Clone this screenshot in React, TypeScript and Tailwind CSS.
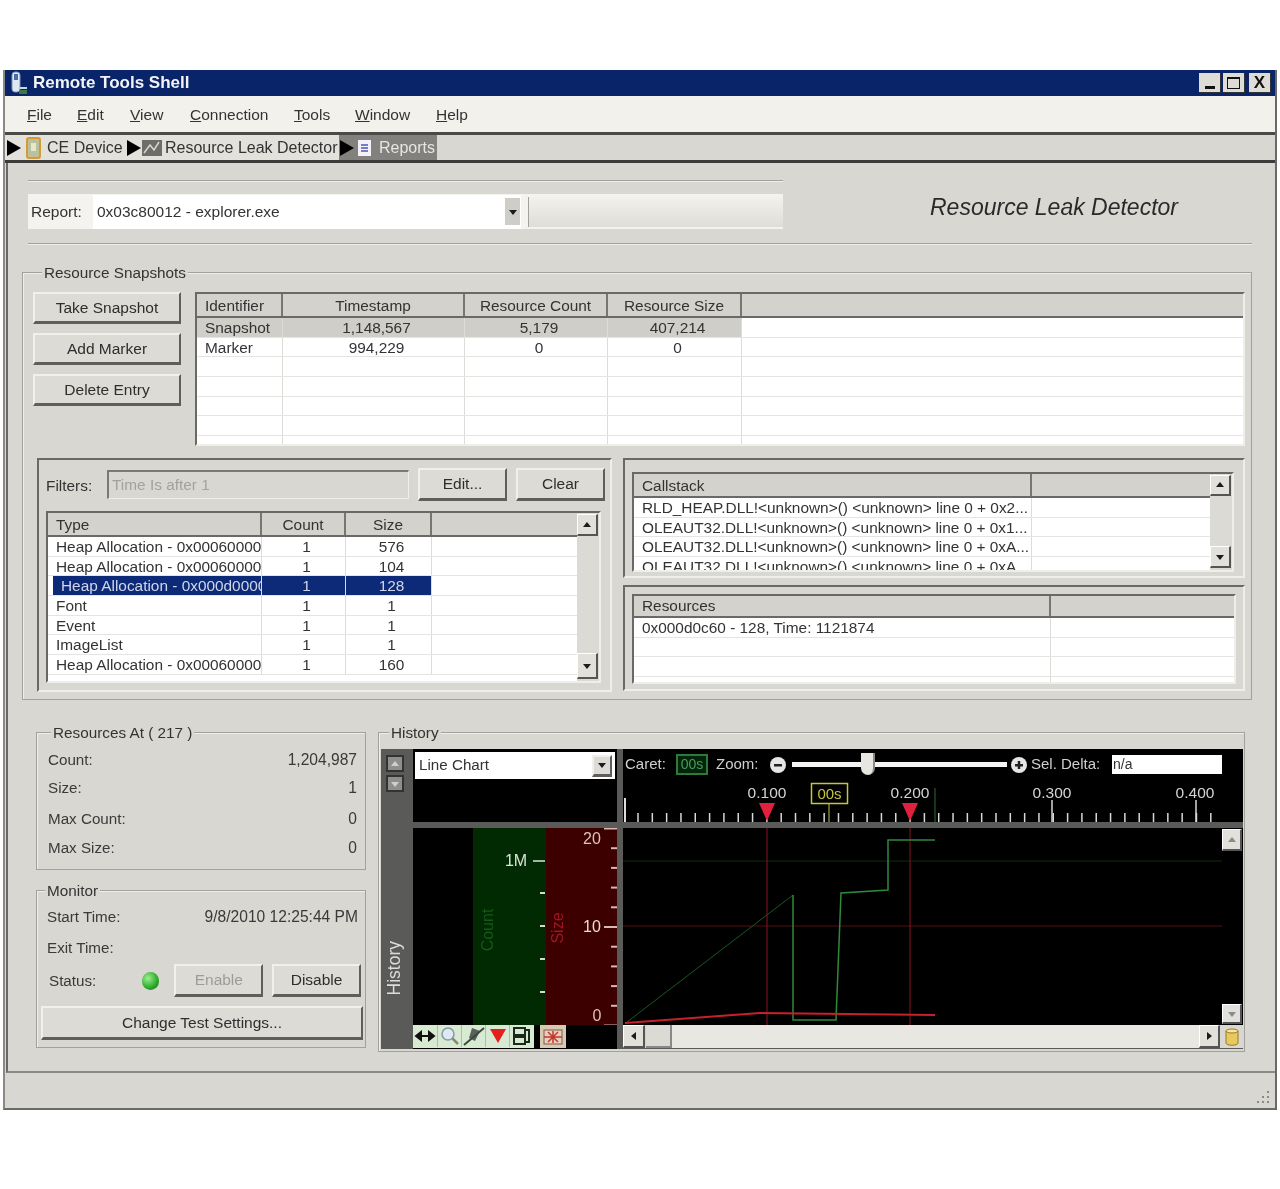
import type { ReactNode } from "react";
import clsx from "clsx";

const raised =
  "border-t-2 border-l-2 border-r-2 border-b-[3px] border-t-[#f1f0ec] border-l-[#f1f0ec] border-r-[#5f5e5b] border-b-[#5f5e5b] bg-[#dddbd5]";
const sunken = "border-t-2 border-l-2 border-r-2 border-b-2 border-t-[#6a6966] border-l-[#6a6966] border-r-[#efeeea] border-b-[#efeeea]";

function Btn({ children, className, disabled }: { children: ReactNode; className: string; disabled?: boolean }) {
  return (
    <button type="button" className={clsx(raised, "flex items-center justify-center text-[15.5px]", disabled ? "text-[#9d9c97]" : "text-[#2e2e2e]", className)}>
      {children}
    </button>
  );
}

function Arrow({ dir, fill = "#1c1c1c" }: { dir: "up" | "down" | "left" | "right"; fill?: string }) {
  const pts = { up: "1,7 5,2 9,7", down: "1,3 9,3 5,8", left: "7,1 7,9 2,5", right: "3,1 3,9 8,5" }[dir];
  return (
    <svg width="10" height="10" viewBox="0 0 10 10">
      <polygon points={pts} fill={fill} />
    </svg>
  );
}

function ScrollBtn({ dir, className, fill }: { dir: "up" | "down" | "left" | "right"; className: string; fill?: string }) {
  return (
    <div className={clsx("flex shrink-0 items-center justify-center border-t border-l border-t-white border-l-white border-r-2 border-b-2 border-r-[#555] border-b-[#555] bg-[#e2e0da]", className)}>
      <Arrow dir={dir} fill={fill} />
    </div>
  );
}

function Group({ title, className, legendClass, children }: { title: string; className: string; legendClass: string; children: ReactNode }) {
  return (
    <div className={clsx("border border-[#a2a19c] shadow-[inset_1px_1px_0_#efeeea]", className)}>
      <div className={clsx("-mt-[10px] h-[20px] w-fit bg-[#d9d7d1] px-[2px] text-[15.3px] leading-[20px] text-[#333]", legendClass)}>{title}</div>
      {children}
    </div>
  );
}

type TableProps = {
  cols: string;
  headers: string[];
  centered?: number[];
  rows: string[][];
  selected?: number;
  tinted?: number;
  headCell?: string;
  rowCount: number;
};

function DataTable({ cols, headers, centered = [], rows, selected, tinted, headCell = "h-[22px] pt-[1px] leading-[22px]", rowCount }: TableProps) {
  const filled = Array.from({ length: rowCount }, (_, i) => rows[i] ?? headers.map(() => ""));
  return (
    <div className="min-w-0 flex-1 overflow-hidden bg-white">
      <div className={clsx("grid border-b-2 border-b-[#6a6966] bg-[#d4d2cc]", cols)}>
        {headers.map((h, i) => (
          <div key={i} className={clsx("truncate border-r-2 border-r-[#77766f] px-[8px] text-[15.4px] text-[#333] last:border-r-0", headCell, centered.includes(i) && "text-center")}>
            {h}
          </div>
        ))}
      </div>
      {filled.map((row, r) => (
        <div key={r} className={clsx("grid h-[19.7px] border-b border-b-[#e4e4e1]", cols)}>
          {row.map((cell, c) => (
            <div
              key={c}
              className={clsx(
                "overflow-hidden whitespace-nowrap border-r border-r-[#dcdcd8] pl-[8px] pr-[2px] text-[15.4px] leading-[19px] last:border-r-0",
                centered.includes(c) && "pl-[2px] text-center",
                c < headers.length - 1 && selected === r && "bg-[#0c2a78] text-[#cfd6ea]",
                c === 0 && selected === r && "ml-[5px] pl-[3px]",
                c < headers.length - 1 && tinted === r && "bg-[#d0cec8] text-[#333]",
                selected !== r && tinted !== r && "text-[#333]",
              )}
            >
              {cell}
            </div>
          ))}
        </div>
      ))}
    </div>
  );
}

function StatRow({ label, value, className }: { label: string; value?: string; className: string }) {
  return (
    <div className={clsx("flex items-center justify-between text-[#3a3a3a]", className)}>
      <span className="text-[15.2px]">{label}</span>
      <span className="text-[15.6px]">{value}</span>
    </div>
  );
}

function Segment({ icon, label, className, arrow = "#000" }: { icon: ReactNode; label: string; className: string; arrow?: string }) {
  return (
    <div className={clsx("flex h-full items-center", className)}>
      <svg width="16" height="18" viewBox="0 0 16 18" className="shrink-0">
        <polygon points="1,1 15,9 1,17" fill={arrow} />
      </svg>
      {icon}
      <span className="whitespace-nowrap">{label}</span>
    </div>
  );
}

const snapshotRows = [
  ["Snapshot", "1,148,567", "5,179", "407,214", ""],
  ["Marker", "994,229", "0", "0", ""],
];

const typeRows = [
  ["Heap Allocation - 0x00060000", "1", "576", ""],
  ["Heap Allocation - 0x00060000", "1", "104", ""],
  ["Heap Allocation - 0x000d0000", "1", "128", ""],
  ["Font", "1", "1", ""],
  ["Event", "1", "1", ""],
  ["ImageList", "1", "1", ""],
  ["Heap Allocation - 0x00060000", "1", "160", ""],
];

const callRows = [
  ["RLD_HEAP.DLL!<unknown>() <unknown> line 0 + 0x2...", ""],
  ["OLEAUT32.DLL!<unknown>() <unknown> line 0 + 0x1...", ""],
  ["OLEAUT32.DLL!<unknown>() <unknown> line 0 + 0xA...", ""],
  ["OLEAUT32.DLL!<unknown>() <unknown> line 0 + 0xA...", ""],
];

const menus = [
  ["F", "ile", "w-[50px]"],
  ["E", "dit", "w-[53px]"],
  ["V", "iew", "w-[60px]"],
  ["C", "onnection", "w-[104px]"],
  ["T", "ools", "w-[61px]"],
  ["W", "indow", "w-[81px]"],
  ["H", "elp", "w-[40px]"],
];

function Ruler() {
  const first = 638;
  const ticks = Array.from({ length: 41 }, (_, i) => first + i * 14.32);
  const labels = [
    ["0.100", 767],
    ["0.200", 910],
    ["0.300", 1052],
    ["0.400", 1195],
  ] as const;
  return (
    <svg viewBox="623 780 620 42" className="block h-[42px] w-[620px]">
      <line x1="625" y1="798" x2="625" y2="822" stroke="#ddd" strokeWidth="2" />
      {ticks.map((x) => (
        <line key={x} x1={x} y1="813" x2={x} y2="822" stroke="#d8d8d8" strokeWidth="1.5" />
      ))}
      <line x1="1052" y1="800" x2="1052" y2="822" stroke="#d8d8d8" strokeWidth="1.5" />
      <line x1="1196" y1="800" x2="1196" y2="822" stroke="#d8d8d8" strokeWidth="1.5" />
      <line x1="935" y1="788" x2="935" y2="822" stroke="#2f6b2f" />
      {labels.map(([t, x]) => (
        <text key={t} x={x} y="798" textAnchor="middle" fontSize="15.5" fill="#d4d4d4">
          {t}
        </text>
      ))}
      <rect x="811.5" y="783.5" width="36" height="20" fill="#000" stroke="#c6c63e" strokeWidth="1.5" />
      <text x="829.5" y="799" textAnchor="middle" fontSize="15" fill="#c6c63e">
        00s
      </text>
      <line x1="829" y1="804" x2="829" y2="822" stroke="#c6c63e" />
      <polygon points="759,803 775,803 767,821" fill="#e0203c" />
      <polygon points="902,803 918,803 910,821" fill="#e0203c" />
    </svg>
  );
}

function Traces() {
  return (
    <svg viewBox="623 828 599 197" className="block h-[197px] w-[599px]">
      <line x1="623" y1="861" x2="1222" y2="861" stroke="#0f2f0f" />
      <line x1="623" y1="926" x2="1222" y2="926" stroke="#5a0c14" />
      <line x1="767" y1="828" x2="767" y2="1025" stroke="#8a1420" />
      <line x1="910" y1="828" x2="910" y2="1025" stroke="#8a1420" />
      <line x1="627" y1="1022" x2="793" y2="895" stroke="#1d5526" />
      <polyline points="793,895 793,1020 836,1020 841,893 888,890 888,840 935,840" fill="none" stroke="#2f8a3a" strokeWidth="1.5" />
      <polyline points="625,1023 760,1013 935,1015" fill="none" stroke="#c8202c" strokeWidth="2" />
    </svg>
  );
}

function AxisPane() {
  const redTicks = Array.from({ length: 11 }, (_, i) => 828 + i * 19.7);
  return (
    <svg viewBox="413 828 204 197" className="block h-[197px] w-[204px]">
      <rect x="413" y="828" width="60" height="197" fill="#000" />
      <rect x="473" y="828" width="73" height="197" fill="#012a03" />
      <rect x="546" y="828" width="71" height="197" fill="#3c0000" />
      {redTicks.map((y, i) => (
        <line key={y} x1={i % 5 === 0 ? 604 : 611} y1={y + 0.5} x2="617" y2={y + 0.5} stroke="#d9b8b4" strokeWidth="2" />
      ))}
      <line x1="533" y1="861" x2="545" y2="861" stroke="#d8e4d8" strokeWidth="1.5" />
      {[893, 926, 959, 992].map((y) => (
        <line key={y} x1="540" y1={y} x2="545" y2={y} stroke="#cfdccf" strokeWidth="2" />
      ))}
      <text x="516" y="866" textAnchor="middle" fontSize="16" fill="#d8e4d8">1M</text>
      <text x="592" y="844" textAnchor="middle" fontSize="16" fill="#e0c0bc">20</text>
      <text x="592" y="932" textAnchor="middle" fontSize="16" fill="#f0d8d4">10</text>
      <text x="597" y="1021" textAnchor="middle" fontSize="16" fill="#e0c0bc">0</text>
      <text transform="translate(493 930) rotate(-90)" textAnchor="middle" fontSize="16" fill="#125c14">Count</text>
      <text transform="translate(563 928) rotate(-90)" textAnchor="middle" fontSize="16" fill="#a01620">Size</text>
    </svg>
  );
}

function ToolIcon({ children, className }: { children: ReactNode; className: string }) {
  return <div className={clsx("flex h-[22px] shrink-0 items-center justify-center border-r border-r-[#aebfa8]", className)}>{children}</div>;
}

function HistoryToolbar() {
  return (
    <div className="flex h-full bg-black">
      <div className="flex h-[23px] bg-[#d8ebd2]">
        <ToolIcon className="w-[25px]">
          <svg width="22" height="14" viewBox="0 0 22 14">
            <path d="M4 7h14M7 3L2 7l5 4zM15 3l5 4-5 4z" fill="#111" stroke="#111" strokeWidth="2" />
          </svg>
        </ToolIcon>
        <ToolIcon className="w-[24px]">
          <svg width="20" height="20" viewBox="0 0 20 20">
            <circle cx="8" cy="8" r="6" fill="#dfe9f2" stroke="#7f9aa8" strokeWidth="1.5" />
            <path d="M12.5 12.5L18 18" stroke="#8a8a70" strokeWidth="2.5" />
          </svg>
        </ToolIcon>
        <ToolIcon className="w-[24px]">
          <svg width="22" height="20" viewBox="0 0 22 20">
            <path d="M9 2l8 3-5 10-6-3z" fill="#5b5f60" />
            <path d="M1 19L21 2" stroke="#3a4a3a" strokeWidth="2" />
          </svg>
        </ToolIcon>
        <ToolIcon className="w-[24px]">
          <svg width="18" height="16" viewBox="0 0 18 16">
            <polygon points="1,1 17,1 9,15" fill="#e4201c" />
          </svg>
        </ToolIcon>
        <ToolIcon className="w-[24px] border-r-0">
          <svg width="22" height="20" viewBox="0 0 22 20">
            <path d="M3 2h11v7H3zM3 11h11v7H3zM14 4h4v12h-4" fill="none" stroke="#1a2a1a" strokeWidth="2" />
          </svg>
        </ToolIcon>
      </div>
      <div className="ml-[6px] flex h-[23px] w-[26px] items-center justify-center bg-[#d9c9b0]">
        <svg width="20" height="16" viewBox="0 0 20 16">
          <rect x="1" y="1" width="18" height="14" fill="#e6cfc0" stroke="#7c5a4a" />
          <path d="M1 8h18M5 3l10 10M15 3L5 13M10 2v12" stroke="#c23a2a" strokeWidth="1.5" />
        </svg>
      </div>
    </div>
  );
}

function ControlBar() {
  return (
    <div className="flex h-[31px] items-center pl-[2px] text-[15px] text-[#cfcfcf]">
      <span className="w-[51px]">Caret:</span>
      <span className="flex h-[21px] w-[32px] items-center justify-center border-2 border-[#2f7a3a] bg-[#02240a] text-[14px] text-[#4f9a5a]">00s</span>
      <span className="ml-[8px] w-[53px]">Zoom:</span>
      <svg width="18" height="18" viewBox="0 0 18 18" className="shrink-0">
        <circle cx="9" cy="9" r="8" fill="#e6e6e6" />
        <rect x="5" y="8" width="8" height="2.5" fill="#222" />
      </svg>
      <div className="relative ml-[5px] h-[5px] w-[215px] bg-[#f4f4f4]">
        <div className="absolute -top-[9px] left-[69px] h-[22px] w-[14px] rounded-b-[7px] border-r-2 border-r-[#8a8a86] bg-[#e8e6e0]" />
      </div>
      <svg width="18" height="18" viewBox="0 0 18 18" className="ml-[3px] shrink-0">
        <circle cx="9" cy="9" r="8" fill="#e6e6e6" />
        <path d="M5 9.2h8M9 5v8" stroke="#222" strokeWidth="2.5" />
      </svg>
      <span className="ml-[3px] w-[81px] whitespace-nowrap">Sel. Delta:</span>
      <span className="flex h-[19px] w-[110px] items-center bg-white pl-[1px] text-[14px] text-[#333]">n/a</span>
    </div>
  );
}

function HistoryPanel() {
  return (
    <div className="ml-[2px] mt-[6px] grid h-[300px] w-[862px] grid-cols-[32px_204px_6px_620px] grid-rows-[73px_6px_197px_24px] bg-[#5a5a59]">
      <div className="col-start-1 row-span-4 row-start-1 flex flex-col items-center pr-[4px] pt-[6px]">
        <div className="flex h-[17px] w-[18px] items-center justify-center border-2 border-[#333] bg-[#8e8e8a]"><Arrow dir="up" fill="#cfcfcb" /></div>
        <div className="mt-[3px] flex h-[17px] w-[18px] items-center justify-center border-2 border-[#333] bg-[#8e8e8a]"><Arrow dir="down" fill="#cfcfcb" /></div>
        <div className="mt-[149px] rotate-180 text-[17.5px] leading-none text-[#dcdcdc] [writing-mode:vertical-rl]">History</div>
      </div>
      <div className="col-start-2 row-start-1 bg-black pt-[3px]">
        <div className="mx-[2px] flex h-[27px] items-center justify-between bg-white pl-[4px] pr-[3px] text-[15.2px] text-[#333]">
          Line Chart
          <div className={clsx(raised, "flex h-[22px] w-[20px] items-center justify-center")}><Arrow dir="down" /></div>
        </div>
      </div>
      <div className="col-start-4 row-start-1 bg-black">
        <ControlBar />
        <Ruler />
      </div>
      <div className="col-start-2 row-start-3"><AxisPane /></div>
      <div className="col-start-4 row-start-3 flex bg-black">
        <Traces />
        <div className="flex w-[21px] flex-col justify-between py-[1px]">
          <ScrollBtn dir="up" fill="#8a8a86" className="h-[22px] w-[20px]" />
          <ScrollBtn dir="down" fill="#8a8a86" className="h-[20px] w-[20px]" />
        </div>
      </div>
      <div className="col-start-2 row-start-4"><HistoryToolbar /></div>
      <div className="col-start-4 row-start-4 flex h-[23px] bg-[#d4d2cc]">
        <ScrollBtn dir="left" className="h-[23px] w-[22px]" />
        <div className="ml-[1px] h-[23px] w-[26px] border-r-2 border-b-2 border-r-[#888] border-b-[#888] bg-[#dcdad4]" />
        <div className="flex-1 bg-[#e9e7e1]" />
        <ScrollBtn dir="right" className="h-[23px] w-[21px]" />
        <div className="flex w-[23px] items-center justify-center bg-[#d9d7d1]">
          <svg width="14" height="18" viewBox="0 0 14 18">
            <path d="M1 3v12c0 3 12 3 12 0V3z" fill="#e8c860" stroke="#9a7a20" />
            <ellipse cx="7" cy="3" rx="6" ry="2" fill="#f6e6a0" stroke="#9a7a20" />
          </svg>
        </div>
      </div>
    </div>
  );
}

export default function App() {
  return (
    <div className="h-[1189px] w-[1280px] overflow-hidden bg-white pt-[70px] font-['Liberation_Sans',sans-serif] blur-[0.5px]">
      <div className="mx-[3px] flex h-[1040px] flex-col border-r-2 border-b-2 border-l-2 border-r-[#6a6966] border-b-[#6a6966] border-l-[#8a8985] bg-[#d9d7d1]">
        {/* title bar */}
        <div className="flex h-[26px] shrink-0 items-center justify-between bg-[#0a2469] pl-[5px] pr-[4px]">
          <div className="flex items-center">
            <svg width="20" height="24" viewBox="0 0 20 24">
              <rect x="2" y="1" width="8" height="20" rx="3" fill="#dfe8f2" stroke="#7a93b8" />
              <rect x="4" y="3" width="4" height="6" fill="#4a6ea8" />
              <path d="M10 17h7" stroke="#c8d8e8" strokeWidth="2" />
              <rect x="9" y="19" width="8" height="4" fill="#3a7a4a" />
            </svg>
            <span className="ml-[3px] text-[17px] font-bold text-[#f2f4f8]">Remote Tools Shell</span>
          </div>
          <div className="flex items-center gap-[2px]">
            <div className="flex h-[20px] w-[22px] items-end justify-center border-r border-b border-r-[#333] border-b-[#333] bg-[#dedcd6] pb-[3px]"><div className="h-[3px] w-[10px] bg-[#111]" /></div>
            <div className="flex h-[20px] w-[22px] items-center justify-center border-r border-b border-r-[#333] border-b-[#333] bg-[#dedcd6]"><div className="h-[12px] w-[13px] border border-t-2 border-[#111]" /></div>
            <div className="ml-[2px] flex h-[20px] w-[22px] items-center justify-center border-r border-b border-r-[#333] border-b-[#333] bg-[#dedcd6] text-[17px] font-bold leading-none text-[#111]">X</div>
          </div>
        </div>
        {/* menu */}
        <div className="flex h-[36px] shrink-0 items-center bg-[#f3f1ec] pl-[22px] pt-[2px] text-[15.5px] text-[#333]">
          {menus.map(([first, rest, w]) => (
            <span key={first} className={w}>
              <u>{first}</u>
              {rest}
            </span>
          ))}
        </div>
        {/* breadcrumb */}
        <div className="flex h-[31px] shrink-0 items-center border-t-[3px] border-b-[3px] border-t-[#4a4a48] border-b-[#3c3c3a] bg-[#d9d7d1] text-[16px] text-[#333]">
          <Segment
            className="w-[120px] bg-[#e3e1db] pl-[1px]"
            label="CE Device"
            icon={
              <svg width="16" height="22" viewBox="0 0 16 22" className="ml-[4px] mr-[5px] shrink-0">
                <rect x="1" y="1" width="13" height="20" rx="2" fill="#b8c2a0" stroke="#d89a30" strokeWidth="2" />
                <rect x="5" y="6" width="5" height="8" fill="#e8e8c8" />
              </svg>
            }
          />
          <Segment
            className="w-[214px] bg-[#e3e1db] pl-[1px]"
            label="Resource Leak Detector"
            icon={
              <svg width="20" height="18" viewBox="0 0 20 18" className="mr-[3px] shrink-0">
                <rect x="0" y="1" width="20" height="16" fill="#6e6e68" />
                <path d="M2 14L8 6l4 5 5-8" stroke="#d8d8d0" strokeWidth="1.5" fill="none" />
              </svg>
            }
          />
          <Segment
            className="w-[98px] bg-[#82817d] text-[#e6e6e2]"
            label="Reports"
            icon={
              <svg width="13" height="18" viewBox="0 0 13 18" className="ml-[3px] mr-[8px] shrink-0">
                <rect x="0" y="1" width="13" height="16" fill="#f2f2f8" />
                <path d="M3 6h7M3 9h7M3 12h7" stroke="#4a5ab8" strokeWidth="1.5" />
              </svg>
            }
          />
        </div>
        {/* main */}
        <div className="ml-[1px] flex-1 border-b-2 border-l-2 border-b-[#8a8985] border-l-[#6a6966] pl-[14px] pt-[17px]">
          <div className="ml-[6px] h-[2px] w-[755px] border-t border-t-[#a2a19c] bg-[#efeeea]" />
          <div className="flex h-[61px] items-start justify-between">
            <div className="ml-[6px] mt-[12px] flex h-[35px] w-[755px] items-center bg-[#f4f3ef] text-[15.5px] text-[#333]">
              <span className="ml-[3px] w-[62px]">Report:</span>
              <div className="flex h-[34px] w-[428px] items-center justify-between bg-white pl-[4px] pr-[1px]">
                0x03c80012 - explorer.exe
                <div className="flex h-[27px] w-[15px] items-center justify-center bg-[#cfcdc7]"><Arrow dir="down" /></div>
              </div>
              <div className="ml-[7px] h-[30px] w-[255px] border-l border-l-[#a2a19c] bg-gradient-to-b from-[#f2f1ed] to-[#dfddd7]" />
            </div>
            <div className="mr-[97px] mt-[8px] text-[23px] italic text-[#2a2a2a]">Resource Leak Detector</div>
          </div>
          <div className="ml-[6px] h-[2px] w-[1224px] border-t border-t-[#a2a19c] bg-[#efeeea]" />

          {/* snapshots */}
          <Group title="Resource Snapshots" className="mt-[27px] h-[428px] w-[1230px]" legendClass="ml-[19px]">
            <div className="mt-[9px] flex pl-[10px]">
              <div className="flex w-[148px] flex-col gap-[9px]">
                <Btn className="h-[32px]">Take Snapshot</Btn>
                <Btn className="h-[32px]">Add Marker</Btn>
                <Btn className="h-[32px]">Delete Entry</Btn>
              </div>
              <div className={clsx(sunken, "ml-[14px] flex h-[154px] w-[1050px]")}>
                <DataTable
                  cols="grid-cols-[86px_182px_143px_134px_1fr]"
                  headers={["Identifier", "Timestamp", "Resource Count", "Resource Size", ""]}
                  centered={[1, 2, 3]}
                  rows={snapshotRows}
                  tinted={0}
                  rowCount={7}
                />
              </div>
            </div>
            <div className="mt-[12px] flex pl-[14px]">
              {/* filters + types */}
              <div className={clsx(sunken, "h-[234px] w-[575px] pl-[7px] pt-[7px]")}>
                <div className="flex h-[34px] items-center text-[15.4px] text-[#333]">
                  <span className="w-[61px] pt-[3px]">Filters:</span>
                  <div className="flex h-[29px] w-[302px] items-center border-t-2 border-l-2 border-r border-b border-t-[#7a7974] border-l-[#7a7974] border-r-[#efeeea] border-b-[#efeeea] pl-[3px] text-[#a3a29d]">Time Is after 1</div>
                  <Btn className="ml-[9px] h-[33px] w-[89px]">Edit...</Btn>
                  <Btn className="ml-[9px] h-[33px] w-[89px]">Clear</Btn>
                </div>
                <div className={clsx(sunken, "mt-[10px] flex h-[172px] w-[555px] border-r-0 border-b-0")}>
                  <DataTable
                    cols="grid-cols-[214px_84px_86px_1fr]"
                    headers={["Type", "Count", "Size", ""]}
                    centered={[1, 2]}
                    rows={typeRows}
                    selected={2}
                    rowCount={7}
                  />
                  <div className="flex w-[22px] flex-col justify-between bg-[#dcdad4] pb-[2px] pt-[1px]">
                    <ScrollBtn dir="up" className="h-[22px] w-[21px]" />
                    <ScrollBtn dir="down" className="h-[26px] w-[21px]" />
                  </div>
                </div>
              </div>
              {/* callstack + resources */}
              <div className="ml-[11px] flex w-[622px] flex-col gap-[7px]">
                <div className={clsx(sunken, "h-[120px] pl-[7px] pt-[12px]")}>
                  <div className={clsx(sunken, "flex h-[100px] w-[602px] border-r-0 border-b-0")}>
                    <DataTable cols="grid-cols-[398px_1fr]" headers={["Callstack", ""]} rows={callRows} rowCount={4} />
                    <div className="flex w-[22px] flex-col justify-between bg-[#dcdad4] pb-[2px] pt-[1px]">
                      <ScrollBtn dir="up" className="h-[21px] w-[21px]" />
                      <ScrollBtn dir="down" className="h-[22px] w-[21px]" />
                    </div>
                  </div>
                </div>
                <div className={clsx(sunken, "h-[106px] pl-[7px] pt-[7px]")}>
                  <div className={clsx(sunken, "flex h-[90px] w-[604px] border-r-0 border-b-0")}>
                    <DataTable
                      cols="grid-cols-[417px_1fr]"
                      headers={["Resources", ""]}
                      headCell="h-[20px] leading-[20px]"
                      rows={[["0x000d0c60 - 128, Time: 1121874", ""]]}
                      rowCount={4}
                    />
                  </div>
                </div>
              </div>
            </div>
          </Group>

          {/* bottom */}
          <div className="mt-[32px] flex pl-[14px]">
            <div className="w-[330px]">
              <Group title="Resources At ( 217 )" className="h-[138px] pl-[11px] pr-[8px]" legendClass="ml-[3px]">
                <StatRow label="Count:" value="1,204,987" className="mt-[3px] h-[28px]" />
                <StatRow label="Size:" value="1" className="h-[28px]" />
                <StatRow label="Max Count:" value="0" className="h-[34px]" />
                <StatRow label="Max Size:" value="0" className="h-[24px]" />
              </Group>
              <Group title="Monitor" className="mt-[20px] h-[158px] px-[4px]" legendClass="ml-[4px]">
                <StatRow label="Start Time:" value="9/8/2010 12:25:44 PM" className="mt-[2px] h-[28px] pl-[6px] pr-[3px]" />
                <StatRow label="Exit Time:" className="mt-[3px] h-[28px] pl-[6px]" />
                <div className="mt-[2px] flex h-[33px] items-center text-[15.2px] text-[#3a3a3a]">
                  <span className="ml-[8px] w-[94px] pt-[2px]">Status:</span>
                  <span className="h-[18px] w-[18px] rounded-full bg-[radial-gradient(circle_at_35%_35%,#9cf08c,#2aa82a_60%,#1a6a1a)]" />
                  <Btn disabled className="ml-[15px] h-[33px] w-[90px]">Enable</Btn>
                  <Btn className="ml-[9px] h-[33px] w-[90px]">Disable</Btn>
                </div>
                <Btn className="mt-[9px] h-[34px] w-[322px]">Change Test Settings...</Btn>
              </Group>
            </div>
            <Group title="History" className="ml-[12px] h-[320px] w-[867px]" legendClass="ml-[10px]">
              <HistoryPanel />
            </Group>
          </div>
        </div>
        {/* status bar */}
        <div className="flex h-[35px] shrink-0 items-end justify-end pb-[5px] pr-[4px]">
          <svg width="18" height="14" viewBox="0 0 18 14">
            <path d="M14 2h2v2h-2zM9 7h2v2H9zM14 7h2v2h-2zM4 12h2v2H4zM9 12h2v2H9zM14 12h2v2h-2z" fill="#8a8985" />
          </svg>
        </div>
      </div>
    </div>
  );
}
